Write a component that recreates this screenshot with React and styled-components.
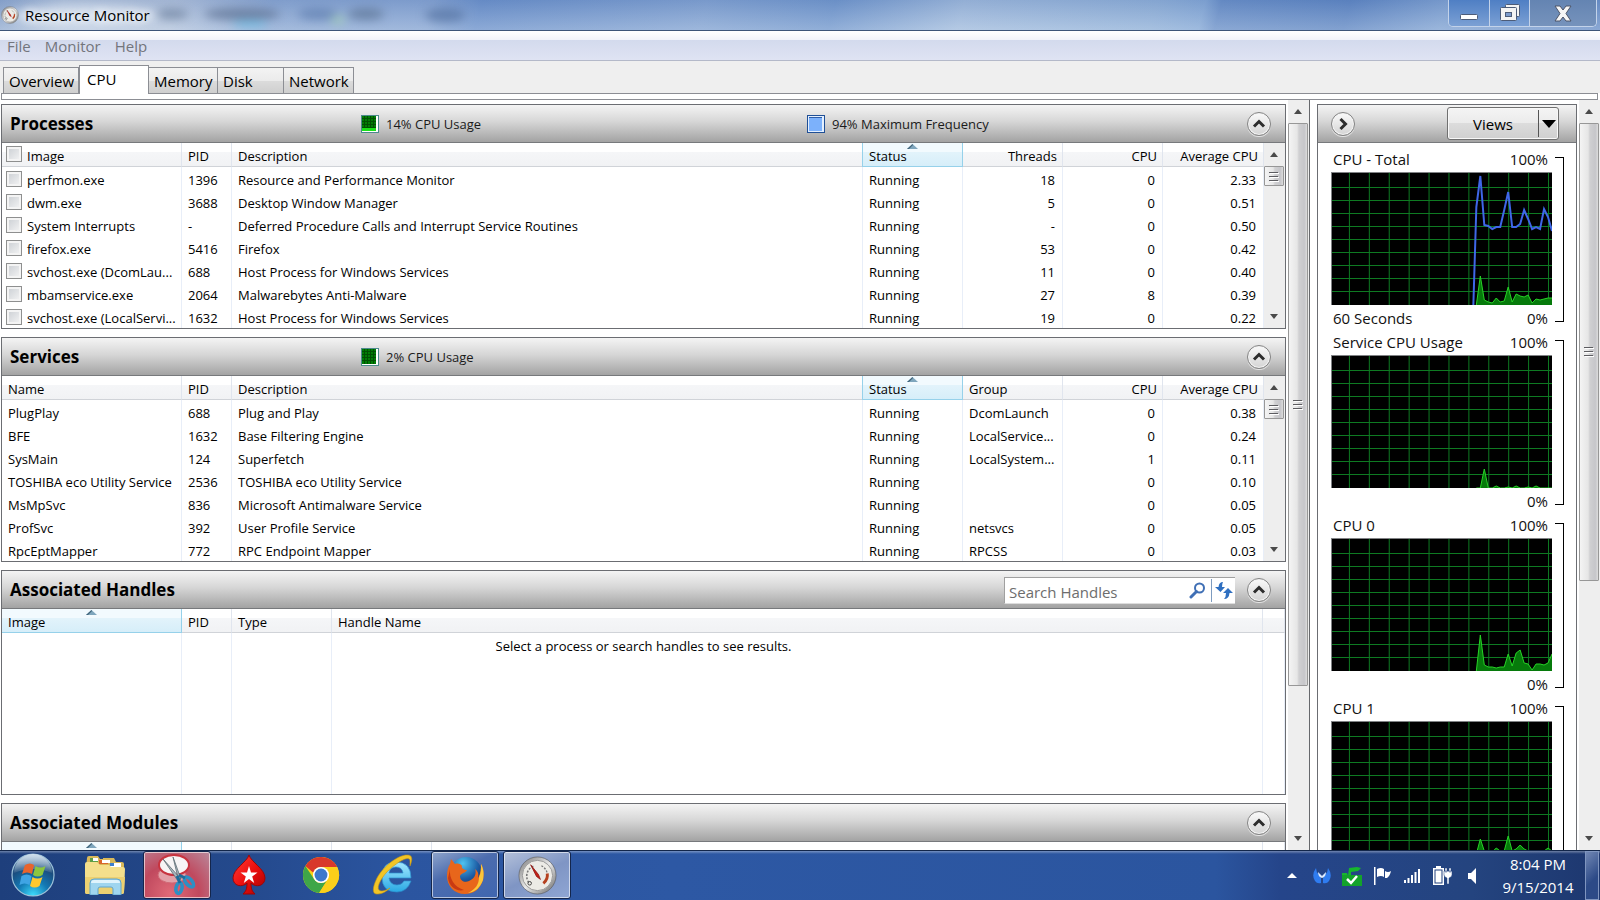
import React from "react";
import styled, { createGlobalStyle, css } from "styled-components";

const GlobalStyle = createGlobalStyle`
  *, *::before, *::after { box-sizing: border-box; }
  html, body { margin: 0; height: 100%; overflow: hidden; }
  body, button, input { font-family: "Open Sans", "Noto Sans", sans-serif; color: #000; }
  button { padding: 0; border: 0; background: none; }
  svg { display: block; }
`;

/* ---------- window frame ---------- */

const Desktop = styled.div`
  display: flex;
  flex-direction: column;
  height: 100vh;
  background: #fff;
`;

const TitleBar = styled.header`
  position: relative;
  display: flex;
  align-items: center;
  flex: none;
  height: 31px;
  padding-right: 3px;
  border-bottom: 1px solid #3c5478;
  overflow: hidden;
  background:
    linear-gradient(180deg, rgba(50, 80, 150, 0.12), rgba(255, 255, 255, 0.22)),
    linear-gradient(105deg, #8fa9cf 0%, #b4c5dc 4%, #b2c3dc 11%, #8ba8d3 17%, #86a5d3 27%, #6c92cb 30%, #82a3d2 44%, #7298cd 52%, #a0bbdd 60%, #8fb0d8 72%, #84a8d6 75%, #6a90c8 76%, #5f87c3 84%, #7fa2d2 90%, #6a90c8 100%);
`;

const Haze = styled.svg`
  position: absolute;
  left: 0;
  top: 0;
  filter: blur(5px);
`;

const AppTitle = styled.h1`
  position: relative;
  display: flex;
  align-items: center;
  flex: 1;
  gap: 6px;
  margin: 0;
  padding-left: 1px;
  font-size: 15px;
  font-weight: 400;
  text-shadow: 0 0 8px #fff, 0 0 8px #fff;
`;

const Caption = styled.div`
  position: relative;
  display: flex;
  align-self: flex-start;
  height: 27px;
  border: 1px solid #c3d3ea;
  border-top: 0;
  border-radius: 0 0 5px 5px;
  overflow: hidden;
`;

const CaptionButton = styled.button`
  display: grid;
  place-items: center;
  width: ${(p) => (p.$wide ? 67 : 40)}px;
  background: ${(p) => (p.$wide ? "linear-gradient(#6484b2, #7693bc)" : "linear-gradient(#4f7fc4, #7ba0d4)")};
  & + & { border-left: 1px solid #c3d3ea; }
`;

const MenuBar = styled.nav`
  display: flex;
  align-items: center;
  flex: none;
  gap: 14px;
  height: 30px;
  padding: 0 7px;
  border-bottom: 1px solid #b4b9c9;
  background: linear-gradient(#fff 0, #f1f3fa 30%, #d3daed 31%, #dfe3f3 100%);
`;

const MenuItem = styled.button`
  font-size: 15px;
  color: #73757c;
`;

const TabStrip = styled.div`
  display: flex;
  align-items: flex-end;
  flex: none;
  height: 32px;
  padding-left: 3px;
  background: #efefef;
`;

const Tab = styled.button`
  width: ${(p) => p.$width}px;
  height: 26px;
  padding-left: 5px;
  border: 1px solid #8c8e94;
  border-left-width: ${(p) => (p.$first ? 1 : 0)}px;
  border-bottom: 0;
  background: linear-gradient(#f3f3f3, #ebebeb 50%, #dcdcdc 51%, #cfcfcf);
  font-size: 15px;
  line-height: 26px;
  text-align: left;
  white-space: nowrap;
  ${(p) =>
    p.$active &&
    css`
      position: relative;
      z-index: 1;
      height: 29px;
      margin-bottom: -1px;
      padding: 0 0 4px 7px;
      background: #fff;
    `}
`;

const TabEdge = styled.div`
  flex: none;
  height: 7px;
  margin: 0 2px 0 1px;
  border: 1px solid #8c8e94;
  background: #fff;
`;

const Workspace = styled.div`
  display: flex;
  flex: 1;
  min-height: 0;
  padding-left: 1px;
  background: #fff;
`;

/* ---------- scroll bars ---------- */

const ScrollTrack = styled.div`
  display: flex;
  flex-direction: column;
  align-items: center;
  justify-content: space-between;
  flex: none;
  width: 21px;
  padding-right: 1px;
  background: #eee;
`;

const ScrollArrow = styled.button`
  display: grid;
  place-items: center;
  flex: none;
  width: 20px;
  height: 23px;
`;

const ScrollLane = styled.div`
  flex: 1;
  width: 100%;
  min-height: 0;
`;

const Thumb = styled.div`
  display: grid;
  place-items: center;
  height: ${(p) => p.$size};
  border: 1px solid #979797;
  border-radius: 1px;
  background: linear-gradient(90deg, #f4f4f4, #e6e6e6 45%, #d0d0d2 55%, #c6c6ca 85%, #dcdcdc);
`;

function ArrowGlyph({ down }) {
  return (
    <svg width="8" height="5" viewBox="0 0 8 5">
      <path d={down ? "M0 0h8L4 5z" : "M4 0l4 5H0z"} fill="#4a4a4a" />
    </svg>
  );
}

function Grip() {
  return (
    <svg width="10" height="11" viewBox="0 0 10 11" shapeRendering="crispEdges">
      <path d="M0 1.5h9M0 5.5h9M0 9.5h9" stroke="#5c5c60" />
      <path d="M1 2.5h9M1 6.5h9M1 10.5h9" stroke="#fff" />
    </svg>
  );
}

function ScrollBar({ size }) {
  return (
    <ScrollTrack>
      <ScrollArrow aria-label="Scroll up"><ArrowGlyph /></ScrollArrow>
      <ScrollLane>
        <Thumb $size={size}><Grip /></Thumb>
      </ScrollLane>
      <ScrollArrow aria-label="Scroll down"><ArrowGlyph down /></ScrollArrow>
    </ScrollTrack>
  );
}

/* ---------- sections ---------- */

const Sections = styled.main`
  display: flex;
  flex-direction: column;
  flex: 1;
  gap: 8px;
  min-width: 0;
  padding-top: 4px;
  overflow: hidden;
`;

const Section = styled.section`
  display: flex;
  flex-direction: column;
  flex: none;
  height: 225px;
  border: 1px solid #6b6d72;
`;

const headerFill = css`
  height: 38px;
  border-bottom: 1px solid #77797c;
  background: linear-gradient(#f4f4f4, #d6d6d6 45%, #a3a3a3);
`;

const SectionHeader = styled.div`
  ${headerFill}
  display: grid;
  grid-template-columns: 359px 446px 1fr auto;
  align-items: center;
  flex: none;
  padding-right: 14px;
`;

const SectionTitle = styled.h2`
  margin: 0;
  padding-left: 8px;
  font-size: 17px;
  font-weight: 700;
  line-height: 38px;
  white-space: nowrap;
`;

const Metric = styled.div`
  display: flex;
  align-items: center;
  gap: 7px;
  font-size: 13px;
  color: #1b1b1b;
`;

const HeaderTools = styled.div`
  display: flex;
  align-items: center;
  grid-column: 4;
  gap: 12px;
`;

const RoundButton = styled.button`
  display: grid;
  place-items: center;
  width: 24px;
  height: 24px;
  border: 1px solid #848484;
  border-radius: 50%;
  background: linear-gradient(#fafafa, #d4d4d4);
  box-shadow: inset 0 0 0 1px #f3f3f3, 0 1px 0 #e6e6e6;
`;

const SectionBody = styled.div`
  display: flex;
  flex: 1;
  min-height: 0;
  overflow: hidden;
`;

const TableArea = styled.div`
  flex: 1;
  min-width: 0;
`;

const Table = styled.table`
  width: 100%;
  border-collapse: separate;
  border-spacing: 0;
  table-layout: fixed;
  font-size: 13px;
`;

const Th = styled.th`
  position: relative;
  height: 24px;
  padding: 2px ${(p) => (p.$right ? 5 : 6)}px 0 ${(p) => (p.$check ? 4 : 6)}px;
  border-right: 1px solid #e0e5ee;
  border-bottom: 1px solid #d0d3d8;
  background: linear-gradient(#fff 40%, #f5f6f8 41%, #f1f2f4);
  font-weight: 400;
  line-height: 20px;
  text-align: ${(p) => (p.$right ? "right" : "left")};
  white-space: nowrap;
  ${(p) =>
    p.$sorted &&
    css`
      border-color: #96d1ea;
      background: linear-gradient(#f2fafe 40%, #e2f3fb 41%, #d6eef9);
      box-shadow: -1px 0 0 #96d1ea;
    `}
`;

const SortMark = styled.svg`
  position: absolute;
  top: 1px;
  left: 50%;
  margin-left: -6px;
`;

const Td = styled.td`
  height: 23px;
  padding: 3px 7px 0 ${(p) => (p.$check ? 4 : 6)}px;
  border-right: 1px solid #e8eef8;
  line-height: 20px;
  text-align: ${(p) => (p.$right ? "right" : "left")};
  white-space: nowrap;
  overflow: hidden;
`;

const FillCell = styled(Td)`
  height: 162px;
`;

const NoteArea = styled.div`
  display: grid;
  flex: 1;
  min-width: 0;
  & > * { grid-area: 1 / 1; }
`;

const Note = styled.p`
  position: relative;
  margin: 0;
  padding-top: 27px;
  font-size: 13px;
  line-height: 20px;
  text-align: center;
`;

const CheckLabel = styled.label`
  display: flex;
  align-items: center;
  gap: 5px;
`;

const CheckBox = styled.input`
  appearance: none;
  flex: none;
  width: 16px;
  height: 16px;
  margin: 0 0 3px;
  border: 1px solid #8e8f8f;
  background: linear-gradient(135deg, #c9cdd2, #f6f6f6);
  box-shadow: inset 0 0 0 2px #f4f4f4;
`;

const SearchBox = styled.div`
  display: flex;
  align-items: center;
  width: 231px;
  height: 27px;
  border: 1px solid #a0a0a0;
  border-right: 0;
  border-bottom-color: #ddd;
  background: #fff;
`;

const SearchInput = styled.input`
  flex: 1;
  min-width: 0;
  height: 25px;
  padding: 3px 4px 0;
  border: 0;
  outline: 0;
  background: none;
  font-size: 15px;
  &::placeholder { color: #6d6d6d; opacity: 1; }
`;

const SearchAction = styled.button`
  display: grid;
  place-items: center;
  width: ${(p) => (p.$wide ? 28 : 24)}px;
  height: 23px;
  & + & { border-left: 1px solid #7e9cc0; }
`;

function Chevron({ right }) {
  return (
    <svg width="14" height="14" viewBox="0 0 14 14" fill="none" stroke="#2d2d2d" strokeWidth="3">
      <path d={right ? "M4.5 2l5 5-5 5" : "M2 9.5l5-5 5 5"} />
    </svg>
  );
}

function UsageIcon({ level }) {
  return (
    <svg width="18" height="18" viewBox="0 0 18 18" shapeRendering="crispEdges">
      <rect width="18" height="18" fill="#fff" />
      <rect x="0" y="0" width="15" height="16" fill="#007d05" />
      <path d="M0 .5h17v17H.5V0" fill="none" stroke="#4c8a8c" />
      <path d="M3.5 1v15M6.5 1v15M9.5 1v15M12.5 1v15M1 3.5h14M1 6.5h14M1 9.5h14M1 12.5h14" stroke="#005003" />
      <rect x="1" y={16 - level} width="14" height={level} fill="#19e219" />
    </svg>
  );
}

function FrequencyIcon() {
  return (
    <svg width="18" height="18" viewBox="0 0 18 18" shapeRendering="crispEdges">
      <rect x=".5" y=".5" width="17" height="17" fill="#e4f0ff" stroke="#1f4f96" />
      <rect x="2" y="3" width="13" height="13" fill="#7cb1fb" />
      <path d="M2 2.5h13" stroke="#2e5da8" />
    </svg>
  );
}

function SortArrow() {
  return (
    <SortMark width="11" height="5" viewBox="0 0 11 5">
      <path d="M5.5 0L11 5H0z" fill="#7ea6bd" />
      <path d="M5.5 0L0 5h2L6 1z" fill="#3f6379" />
    </SortMark>
  );
}

function HeadRow({ columns, checkbox }) {
  return (
    <thead>
      <tr>
        {columns.map((c, i) => (
          <Th key={i} scope="col" $right={c.right} $sorted={c.sorted} $check={checkbox && i === 0}>
            {c.sorted && <SortArrow />}
            {checkbox && i === 0 ? (
              <CheckLabel><CheckBox type="checkbox" />{c.label}</CheckLabel>
            ) : (
              c.label
            )}
          </Th>
        ))}
      </tr>
    </thead>
  );
}

const Col = styled.col`
  width: ${(p) => (p.$width ? `${p.$width}px` : "auto")};
`;

function ColumnWidths({ columns }) {
  return <colgroup>{columns.map((c, i) => <Col key={i} $width={c.width} />)}</colgroup>;
}

function DataSection({ title, metrics, columns, rows, checkbox }) {
  return (
    <Section>
      <SectionHeader>
        <SectionTitle>{title}</SectionTitle>
        {metrics}
        <HeaderTools><RoundButton aria-label={`Collapse ${title}`}><Chevron /></RoundButton></HeaderTools>
      </SectionHeader>
      <SectionBody>
        <TableArea>
          <Table>
            <ColumnWidths columns={columns} />
            <HeadRow columns={columns} checkbox={checkbox} />
            <tbody>
              {rows.map((row) => (
                <tr key={row[0]}>
                  {row.map((cell, i) => (
                    <Td key={i} $right={columns[i].right} $check={checkbox && i === 0}>
                      {checkbox && i === 0 ? (
                        <CheckLabel><CheckBox type="checkbox" />{cell}</CheckLabel>
                      ) : (
                        cell
                      )}
                    </Td>
                  ))}
                </tr>
              ))}
            </tbody>
          </Table>
        </TableArea>
        <ScrollBar size="20px" />
      </SectionBody>
    </Section>
  );
}

function EmptySection({ title, columns, note, tools }) {
  return (
    <Section>
      <SectionHeader>
        <SectionTitle>{title}</SectionTitle>
        <HeaderTools>
          {tools}
          <RoundButton aria-label={`Collapse ${title}`}><Chevron /></RoundButton>
        </HeaderTools>
      </SectionHeader>
      <SectionBody>
        <NoteArea>
          <Table>
            <ColumnWidths columns={columns} />
            <HeadRow columns={columns} />
            <tbody>
              <tr>{columns.map((c, i) => <FillCell key={i} />)}</tr>
            </tbody>
          </Table>
          {note && <Note>{note}</Note>}
        </NoteArea>
      </SectionBody>
    </Section>
  );
}

/* ---------- data ---------- */

const processColumns = [
  { label: "Image", width: 180 },
  { label: "PID", width: 50 },
  { label: "Description" },
  { label: "Status", width: 100, sorted: true },
  { label: "Threads", width: 100, right: true },
  { label: "CPU", width: 100, right: true },
  { label: "Average CPU", width: 101, right: true },
];

const processes = [
  ["perfmon.exe", "1396", "Resource and Performance Monitor", "Running", "18", "0", "2.33"],
  ["dwm.exe", "3688", "Desktop Window Manager", "Running", "5", "0", "0.51"],
  ["System Interrupts", "-", "Deferred Procedure Calls and Interrupt Service Routines", "Running", "-", "0", "0.50"],
  ["firefox.exe", "5416", "Firefox", "Running", "53", "0", "0.42"],
  ["svchost.exe (DcomLau...", "688", "Host Process for Windows Services", "Running", "11", "0", "0.40"],
  ["mbamservice.exe", "2064", "Malwarebytes Anti-Malware", "Running", "27", "8", "0.39"],
  ["svchost.exe (LocalServi...", "1632", "Host Process for Windows Services", "Running", "19", "0", "0.22"],
];

const serviceColumns = [
  { label: "Name", width: 180 },
  { label: "PID", width: 50 },
  { label: "Description" },
  { label: "Status", width: 100, sorted: true },
  { label: "Group", width: 100 },
  { label: "CPU", width: 100, right: true },
  { label: "Average CPU", width: 101, right: true },
];

const services = [
  ["PlugPlay", "688", "Plug and Play", "Running", "DcomLaunch", "0", "0.38"],
  ["BFE", "1632", "Base Filtering Engine", "Running", "LocalService...", "0", "0.24"],
  ["SysMain", "124", "Superfetch", "Running", "LocalSystem...", "1", "0.11"],
  ["TOSHIBA eco Utility Service", "2536", "TOSHIBA eco Utility Service", "Running", "", "0", "0.10"],
  ["MsMpSvc", "836", "Microsoft Antimalware Service", "Running", "", "0", "0.05"],
  ["ProfSvc", "392", "User Profile Service", "Running", "netsvcs", "0", "0.05"],
  ["RpcEptMapper", "772", "RPC Endpoint Mapper", "Running", "RPCSS", "0", "0.03"],
];

const handleColumns = [
  { label: "Image", width: 180, sorted: true },
  { label: "PID", width: 50 },
  { label: "Type", width: 100 },
  { label: "Handle Name" },
  { label: "", width: 22 },
];

const moduleColumns = [
  { width: 180, sorted: true },
  { width: 50 },
  { width: 100 },
  { width: 100 },
  {},
  { width: 22 },
];

const charts = [
  {
    title: "CPU - Total",
    caption: "60 Seconds",
    floor: "0%",
    usage: [0, 29, 5, 3, 2, 7, 3, 4, 18, 3, 11, 9, 8, 10, 2, 6, 5, 6, 7, 7],
    frequency: [98, 129, 80, 79, 76, 78, 78, 95, 113, 78, 78, 81, 95, 86, 76, 78, 76, 96, 88, 74],
  },
  { title: "Service CPU Usage", floor: "0%", usage: [0, 0, 19, 0, 0, 2, 0, 0, 1, 0, 2, 0, 0, 1, 0, 2, 0, 0, 0, 0] },
  { title: "CPU 0", floor: "0%", usage: [0, 36, 6, 4, 4, 3, 4, 4, 17, 5, 18, 21, 8, 7, 1, 7, 7, 6, 8, 17] },
  { title: "CPU 1", usage: [0, 15, 3, 2, 2, 6, 3, 3, 18, 3, 5, 9, 5, 3, 2, 3, 3, 3, 6, 3] },
];

/* ---------- chart side panel ---------- */

const Splitter = styled.div`
  flex: none;
  width: 8px;
  border-left: 1px solid #66686c;
  background: #fff;
`;

const ChartPanel = styled.aside`
  flex: none;
  width: 260px;
  height: 100%;
  padding-top: 4px;
  overflow: hidden;
`;

const ChartFrame = styled.div`
  height: 100%;
  border: 1px solid #6b6d72;
  border-bottom: 0;
  overflow: hidden;
`;

const ChartHeader = styled.div`
  ${headerFill}
  display: flex;
  align-items: center;
  justify-content: space-between;
  padding: 0 17px 0 13px;
`;

const ViewsButton = styled.button`
  display: flex;
  align-items: center;
  width: 112px;
  height: 33px;
  border: 1px solid #707070;
  border-radius: 3px;
  background: linear-gradient(#f4f4f4, #ebebeb 49%, #dcdcdc 50%, #d0d0d0);
  box-shadow: inset 0 0 0 1px #f8f8f8;
  font-size: 15px;
`;

const ViewsText = styled.span`
  flex: 1;
`;

const ViewsArrow = styled.span`
  display: grid;
  place-items: center;
  width: 20px;
  height: 27px;
  border-left: 1px solid #555;
`;

const ChartList = styled.div`
  display: flex;
  flex-direction: column;
  gap: 3px;
  padding: 4px 12px 0 13px;
`;

const ChartCard = styled.figure`
  display: grid;
  grid-template-columns: 1fr 12px;
  height: 180px;
  margin: 0;
`;

const ChartMain = styled.div`
  display: grid;
  grid-template-rows: 25px 133px 22px;
  min-width: 0;
`;

const ChartLine = styled.div`
  display: flex;
  justify-content: space-between;
  padding: 0 4px 0 2px;
  font-size: 15px;
  line-height: ${(p) => (p.$foot ? 27 : 24)}px;
  color: #111;
  white-space: nowrap;
`;

const Plot = styled.div`
  border: 1px solid #808285;
  border-width: 1px 0 0 1px;
  background: #000;
`;

const Bracket = styled.div`
  width: 9px;
  margin: 10px 0 5px 3px;
  border: 1px solid #000;
  border-left: 0;
`;

const gridX = Array.from({ length: 11 }, (_, i) => 17.5 + i * 20);
const gridY = Array.from({ length: 9 }, (_, i) => 14.5 + i * 13);
const toPoints = (samples) => samples.map((v, i) => `${145 + i * 4},${132 - v}`).join(" ");

function Chart({ title, caption, floor, usage, frequency }) {
  return (
    <ChartCard>
      <ChartMain>
        <ChartLine><span>{title}</span><span>100%</span></ChartLine>
        <Plot>
          <svg width="100%" height="132" viewBox="0 0 221 132" preserveAspectRatio="none">
            <g stroke="#0e7a22" shapeRendering="crispEdges">
              {gridX.map((x) => <line key={x} x1={x} x2={x} y1="0" y2="132" />)}
              {gridY.map((y) => <line key={y} x1="0" x2="221" y1={y} y2={y} />)}
            </g>
            <polygon points={`145,132 ${toPoints(usage)} 221,132`} fill="#067a0b" />
            <polyline points={toPoints(usage)} fill="none" stroke="#27d427" />
            {frequency && (
              <polyline points={`142,132 ${toPoints(frequency)}`} fill="none" stroke="#3f66e8" strokeWidth="2" />
            )}
          </svg>
        </Plot>
        <ChartLine $foot><span>{caption}</span><span>{floor}</span></ChartLine>
      </ChartMain>
      <Bracket />
    </ChartCard>
  );
}

const PanelGap = styled.div`
  flex: none;
  width: 2px;
`;

/* ---------- taskbar ---------- */

const Taskbar = styled.footer`
  display: flex;
  flex: none;
  height: 50px;
  border-top: 1px solid #12264a;
  background:
    linear-gradient(180deg, rgba(255, 255, 255, 0.35) 0, rgba(255, 255, 255, 0) 3px),
    linear-gradient(90deg, #1e3f7c 0, #24498c 15%, #2b55a0 25%, #2d58a4 42%, #2b559f 76%, #25458a 80%, #24447f 92%, #1d376f 100%);
`;

const StartButton = styled.button`
  width: 68px;
  height: 48px;
  padding-left: 11px;
`;

const TaskList = styled.div`
  display: flex;
  flex: 1;
  gap: 4px;
  padding-left: 3px;
`;

const taskFills = {
  snip: "radial-gradient(circle at 40% 90%, #e06a78, #c0495e 50%, #b98a9d)",
  firefox: "linear-gradient(155deg, #8fa5cc, #4c6cae 40%, #3f66b0)",
  perf: "linear-gradient(155deg, #b4c1da, #7f95c4 50%, #8fa6d4)",
};

const Task = styled.button`
  display: grid;
  place-items: center;
  width: 68px;
  height: 48px;
  border: 1px solid transparent;
  border-radius: 3px;
  ${(p) =>
    p.$fill &&
    css`
      border-color: #14264c;
      background: ${taskFills[p.$fill]};
      box-shadow: inset 0 0 0 1px rgba(255, 255, 255, 0.6);
    `}
`;

const Tray = styled.div`
  display: flex;
  align-items: center;
`;

const TrayIcon = styled.button`
  display: grid;
  place-items: center;
  width: 30px;
  height: 30px;
`;

const Clock = styled.time`
  width: 94px;
  margin-left: 4px;
  font-size: 15px;
  line-height: 23px;
  color: #fff;
  text-align: center;
`;

const ShowDesktop = styled.button`
  width: 14px;
  height: 49px;
  margin-right: 1px;
  border: 1px solid #7f95bf;
  background: linear-gradient(135deg, #7187b4, #2c4a87 60%);
`;

/* ---------- drawings ---------- */

function GaugeIcon({ size }) {
  return (
    <svg width={size} height={size} viewBox="0 0 40 40">
      <defs>
        <linearGradient id={`rim${size}`} x1="0" y1="0" x2="1" y2="1">
          <stop offset="0" stopColor="#777" /><stop offset=".5" stopColor="#e8e8e8" /><stop offset="1" stopColor="#666" />
        </linearGradient>
      </defs>
      <circle cx="20" cy="20" r="19" fill={`url(#rim${size})`} stroke="#555" strokeWidth=".6" />
      <circle cx="20" cy="20" r="15.5" fill="#ecebe6" stroke="#999" />
      <path d="M11 27a11 11 0 0 1 6-17" fill="none" stroke="#777" strokeWidth="1.6" strokeDasharray="2 1.5" />
      <path d="M24 10a11 11 0 0 1 6 8" fill="none" stroke="#777" strokeWidth="1.4" strokeDasharray="2 1.5" />
      <path d="M30 18q1 6-4 10" fill="none" stroke="#b5411f" strokeWidth="3" />
      <path d="M13 9l8 10 2 5-4-3z" fill="#c52018" stroke="#8c1410" strokeWidth=".8" />
      <circle cx="12" cy="28" r="1.8" fill="none" stroke="#444" />
    </svg>
  );
}

function StartOrb() {
  return (
    <svg width="45" height="48" viewBox="0 0 45 48">
      <defs>
        <radialGradient id="orb" cx=".5" cy="1" r=".95">
          <stop offset="0" stopColor="#3fe0ff" /><stop offset=".4" stopColor="#1379b4" /><stop offset=".75" stopColor="#1b4b7c" /><stop offset="1" stopColor="#6f93b4" />
        </radialGradient>
        <linearGradient id="orbShine" x1="0" y1="0" x2="0" y2="1">
          <stop offset="0" stopColor="#dbe8f2" stopOpacity=".9" /><stop offset="1" stopColor="#dbe8f2" stopOpacity=".1" />
        </linearGradient>
      </defs>
      <circle cx="22" cy="24" r="21" fill="url(#orb)" stroke="#9fc4da" strokeWidth="1.2" />
      <path d="M3 22a19 19 0 0 1 38 0q-19-8-38 0z" fill="url(#orbShine)" />
      <path d="M14 14q5-3 9 0l-2 9q-5-3-10 0z" fill="#e8642c" />
      <path d="M24.500 15q5 3 10 0l-3 9q-5 3-9.500 0z" fill="#8cc63f" />
      <path d="M10.500 25q5-3 10 0l-2 9q-5-3-10 0z" fill="#3fa4e4" />
      <path d="M21.500 26q5 3 10 0l-3 9q-5 3-9.500 0z" fill="#fdc82f" />
    </svg>
  );
}

function FolderIcon() {
  return (
    <svg width="42" height="40" viewBox="0 0 42 40">
      <path d="M3 3q0-2 2-2h9l2 3h3V3h11l2 4h6q2 0 2 2v5H2z" fill="#d9b95a" />
      <rect x="6" y="3" width="8" height="4" fill="#5c9e48" /><rect x="9" y="3" width="5" height="3" fill="#fff" />
      <rect x="15" y="5" width="9" height="4" fill="#d9662c" /><rect x="18" y="5" width="8" height="3" fill="#fff" />
      <rect x="26" y="8" width="11" height="4" fill="#fff" /><rect x="26" y="8" width="4" height="3" fill="#3f7fcd" />
      <path d="M1 9q0-2 2-2h10l3 3h9l2 2h12q2 0 2 2l-1 23q0 2-2 2H3q-2 0-2-2z" fill="#f4df8c" />
      <path d="M1 22h40l-1 15q0 2-2 2H3q-2 0-2-2z" fill="#ecd071" />
      <path d="M6 28q0-4 4-4h23q4 0 4 4v12h-8v-6q0-2-2-2H16q-2 0-2 2v6H6z" fill="#9fd5ef" stroke="#5fa5cf" />
      <path d="M7 28q0-3 3-3h23q3 0 3 3z" fill="#dff3fc" />
    </svg>
  );
}

function SnipIcon() {
  return (
    <svg width="40" height="42" viewBox="0 0 40 42">
      <ellipse cx="15" cy="21" rx="14" ry="8" fill="#e3a0a8" stroke="#d06a76" />
      <ellipse cx="17" cy="11" rx="15" ry="10" fill="#f7f4f5" stroke="#c8333f" strokeWidth="2" />
      <path d="M6 5l18 20-3 2zM16 3l5 21 3 1z" fill="#a9b6bd" stroke="#5e6c74" strokeWidth=".8" />
      <g fill="none" stroke="#2d8fc4" strokeWidth="3.500">
        <ellipse cx="22" cy="34" rx="3" ry="5.500" transform="rotate(12 22 34)" />
        <ellipse cx="32" cy="28" rx="3" ry="6" transform="rotate(-42 32 28)" />
      </g>
      <path d="M20 22l3 7M22 21l6 3" stroke="#1c6c9b" strokeWidth="3" />
    </svg>
  );
}

function SpadeIcon() {
  return (
    <svg width="36" height="42" viewBox="0 0 36 42">
      <defs>
        <linearGradient id="spade" x1="0" y1="0" x2="1" y2="1">
          <stop offset="0" stopColor="#ff4038" /><stop offset=".5" stopColor="#ee100f" /><stop offset="1" stopColor="#a80000" />
        </linearGradient>
      </defs>
      <path d="M18 1c2 7 16 14 16 23 0 8-9 10-14 5 0 6 1 8 4 11H12c3-3 4-5 4-11-5 5-14 3-14-5C2 15 16 8 18 1z" fill="url(#spade)" stroke="#9d0505" />
      <path d="M18 12l2 6.500h6.500l-5.300 4 2 6.500L18 25l-5.200 4 2-6.500-5.300-4H16z" fill="#fff" />
    </svg>
  );
}

function ChromeIcon() {
  return (
    <svg width="38" height="40" viewBox="0 0 40 40">
      <circle cx="20" cy="20" r="19" fill="#fcd116" />
      <path d="M3.500 10.500A19 19 0 0 1 37 11.500H20a8.500 8.500 0 0 0-8 6z" fill="#d8382b" />
      <path d="M3.500 10.500A19 19 0 0 0 18 38.900l8.500-13.500A8.500 8.500 0 0 1 12.500 24z" fill="#3fa648" />
      <path d="M37 11.500A19 19 0 0 1 18 38.900l8.500-13.500a8.500 8.500 0 0 0-1.500-12.400z" fill="#fbcf1a" />
      <circle cx="20" cy="20" r="8.500" fill="#fff" />
      <circle cx="20" cy="20" r="6.800" fill="#3c78cc" />
    </svg>
  );
}

function ExplorerIcon() {
  return (
    <svg width="42" height="42" viewBox="0 0 42 42">
      <defs>
        <linearGradient id="ie" x1="0" y1="0" x2="0" y2="1">
          <stop offset="0" stopColor="#a5e9ff" /><stop offset="1" stopColor="#29a8e4" />
        </linearGradient>
      </defs>
      <path d="M39 24H17q1 7 8 7 5 0 7-4h7q-4 11-14 11-15 0-15-15Q10 8 24 8q15 0 15 16zM17 19h14q-1-6-7-6t-7 6z" fill="url(#ie)" stroke="#2b90ce" strokeWidth=".7" />
      <path d="M38 12c3-7 2-11-2-11C28 0 12 11 5 24 0 34 0 41 6 40c4 0 9-3 12-6-5 3-9 4-11 2-3-3 3-14 11-21C27 7 38 1 38 7z" fill="#f2c526" stroke="#c79511" strokeWidth=".6" />
    </svg>
  );
}

function FirefoxIcon() {
  return (
    <svg width="38" height="40" viewBox="0 0 38 40">
      <defs>
        <radialGradient id="globe" cx=".4" cy=".2" r=".8">
          <stop offset="0" stopColor="#4ec3f0" /><stop offset=".6" stopColor="#1d5da5" /><stop offset="1" stopColor="#132c62" />
        </radialGradient>
      </defs>
      <circle cx="20" cy="18" r="16" fill="url(#globe)" />
      <path d="M35 9c3 5 3 11 2 16-3 9-9 14-18 14C8 39 1 31 1 21c0-5 1-9 3-12l1-5 4 5c3-1 6 0 7 2-1 2 2 4 5 4-1 3-6 3-7 6 0 5 5 7 9 5 5-2 8-7 6-12 3 2 4 5 3 9 3-5 3-10 3-14z" fill="#e8661b" />
      <path d="M35 9c3 5 3 11 2 16-3 8-8 12-15 13 8-4 11-9 11-16 2-4 2-8 2-13z" fill="#fbc63a" />
      <path d="M4 14c-1 9 4 18 14 21-7 2-15-3-16-12z" fill="#c93a12" />
    </svg>
  );
}

function MagnifierIcon() {
  return (
    <svg width="17" height="17" viewBox="0 0 17 17" fill="none" stroke="#3f6fb5">
      <circle cx="10.500" cy="6" r="4.500" strokeWidth="2" />
      <path d="M7.500 9.500L2 15" strokeWidth="3" strokeLinecap="round" />
    </svg>
  );
}

function RefreshIcon() {
  return (
    <svg width="18" height="17" viewBox="0 0 18 17" fill="#2f6fc0">
      <path d="M8 0Q4 0 3.500 5H0l5.500 5L10 5H7q0-3 1-5z" />
      <path d="M9 17q5 0 5.500-6H18l-5-5-5 5h3q0 4-2 6z" />
    </svg>
  );
}

const tasks = [
  { name: "Windows Explorer", icon: <FolderIcon /> },
  { name: "Snipping Tool", icon: <SnipIcon />, fill: "snip" },
  { name: "PokerStars", icon: <SpadeIcon /> },
  { name: "Google Chrome", icon: <ChromeIcon /> },
  { name: "Internet Explorer", icon: <ExplorerIcon /> },
  { name: "Mozilla Firefox", icon: <FirefoxIcon />, fill: "firefox" },
  { name: "Resource Monitor", icon: <GaugeIcon size={39} />, fill: "perf" },
];

const trayIcons = [
  { name: "Show hidden icons", art: <svg width="10" height="5" viewBox="0 0 10 5"><path d="M5 0l5 5H0z" fill="#fff" /></svg> },
  {
    name: "Malwarebytes",
    art: (
      <svg width="18" height="17" viewBox="0 0 18 17" fill="#2f7cf0">
        <path d="M3 1Q-2 8 2 14q2 3 6 2V11L6 8Q3 5 3 1z" />
        <path d="M15 1q5 7 1 13-2 3-6 2V11l2-3q3-3 3-7z" />
        <path d="M5 5l4 4 4-4q0 5-4 6-4-1-4-6z" fill="#dcebff" />
      </svg>
    ),
  },
  {
    name: "Safely remove hardware",
    art: (
      <svg width="20" height="20" viewBox="0 0 20 20">
        <path d="M0 7h5l1 3 1-8 8-1 4 1-3 3-7 1v3h11v11H0z" fill="#16b62e" />
        <path d="M0 9h20v11H0z" fill="#13a32a" />
        <path d="M5 13l4 4 6-7" fill="none" stroke="#fff" strokeWidth="2.500" />
      </svg>
    ),
  },
  {
    name: "Action Center",
    art: (
      <svg width="18" height="19" viewBox="0 0 18 19" fill="#fff">
        <path d="M1 1h1.500v18H1zM4 3q4-2 7 0v8q-3-2-7 0zM12 5q3 2 6 0-1 5-4 7h-2z" />
      </svg>
    ),
  },
  {
    name: "Network signal",
    art: (
      <svg width="16" height="14" viewBox="0 0 16 14" fill="#fff">
        <path d="M0 11h2v3H0zM3.500 9h2v5h-2zM7 6h2v8H7zM10.500 3h2v11h-2zM14 0h2v14h-2z" />
      </svg>
    ),
  },
  {
    name: "Battery",
    art: (
      <svg width="19" height="19" viewBox="0 0 19 19">
        <path d="M3 0h5v2h3v17H0V2h3z" fill="#fff" />
        <path d="M1.500 3.500h8v14h-8z" fill="#20407f" /><path d="M2.500 4.500h6v12h-6z" fill="#fff" />
        <path d="M11 5h8v4q0 2-3 3v6h-2v-6q-3-1-3-3zM12 2h2v4h-2zM16 2h2v4h-2z" fill="#fff" stroke="#20407f" strokeWidth=".5" />
      </svg>
    ),
  },
  {
    name: "Volume",
    art: (
      <svg width="10" height="18" viewBox="0 0 10 18">
        <path d="M1 6h3l5-5v16l-5-5H1z" fill="#fff" />
      </svg>
    ),
  },
];

function CaptionButtons() {
  return (
    <Caption>
      <CaptionButton aria-label="Minimize">
        <svg width="18" height="16" viewBox="0 0 18 16"><rect x=".5" y="9.500" width="17" height="5" rx="1" fill="#fff" stroke="#4d5c78" /></svg>
      </CaptionButton>
      <CaptionButton aria-label="Restore">
        <svg width="20" height="18" viewBox="0 0 20 18" fill="#f4f4f4" stroke="#4d5c78">
          <rect x="5.500" y=".5" width="14" height="12" rx="1" />
          <rect x=".5" y="3.500" width="16" height="13" rx="1" />
          <rect x="5.500" y="8.500" width="6" height="4" fill="#7c9bcc" />
        </svg>
      </CaptionButton>
      <CaptionButton $wide aria-label="Close">
        <svg width="18" height="17" viewBox="0 0 18 17">
          <path d="M1 1h5l3 4 3-4h5l-5 7.500L17 16h-5l-3-4-3 4H1l5-7.500z" fill="#f6f6f6" stroke="#4d5468" />
        </svg>
      </CaptionButton>
    </Caption>
  );
}

export default function App() {
  return (
    <Desktop>
      <GlobalStyle />
      <TitleBar>
        <Haze width="520" height="30">
          <ellipse cx="85" cy="16" rx="75" ry="11" fill="#dce6f2" opacity=".7" />
          <ellipse cx="172" cy="14" rx="16" ry="5" fill="#5e7391" opacity=".6" />
          <ellipse cx="242" cy="14" rx="38" ry="6" fill="#5b6f90" opacity=".7" />
          <ellipse cx="250" cy="24" rx="18" ry="4" fill="#6cbfe6" opacity=".7" />
          <ellipse cx="318" cy="14" rx="20" ry="6" fill="#5f7fb0" opacity=".7" />
          <ellipse cx="338" cy="20" rx="8" ry="5" fill="#a3cdb9" opacity=".7" />
          <ellipse cx="366" cy="14" rx="18" ry="6" fill="#5c7596" opacity=".7" />
          <ellipse cx="445" cy="15" rx="20" ry="7" fill="#5674a3" opacity=".7" />
        </Haze>
        <AppTitle><GaugeIcon size={18} />Resource Monitor</AppTitle>
        <CaptionButtons />
      </TitleBar>
      <MenuBar>
        <MenuItem>File</MenuItem>
        <MenuItem>Monitor</MenuItem>
        <MenuItem>Help</MenuItem>
      </MenuBar>
      <TabStrip role="tablist">
        <Tab role="tab" $width={76} $first>Overview</Tab>
        <Tab role="tab" aria-selected="true" $width={70} $active $first>CPU</Tab>
        <Tab role="tab" $width={69}>Memory</Tab>
        <Tab role="tab" $width={66}>Disk</Tab>
        <Tab role="tab" $width={70}>Network</Tab>
      </TabStrip>
      <TabEdge />
      <Workspace>
        <Sections>
          <DataSection
            title="Processes"
            columns={processColumns}
            rows={processes}
            checkbox
            metrics={
              <>
                <Metric><UsageIcon level={3} />14% CPU Usage</Metric>
                <Metric><FrequencyIcon />94% Maximum Frequency</Metric>
              </>
            }
          />
          <DataSection
            title="Services"
            columns={serviceColumns}
            rows={services}
            metrics={<Metric><UsageIcon level={0} />2% CPU Usage</Metric>}
          />
          <EmptySection
            title="Associated Handles"
            columns={handleColumns}
            note="Select a process or search handles to see results."
            tools={
              <SearchBox role="search">
                <SearchInput type="text" placeholder="Search Handles" aria-label="Search Handles" />
                <SearchAction $wide aria-label="Search"><MagnifierIcon /></SearchAction>
                <SearchAction aria-label="Refresh"><RefreshIcon /></SearchAction>
              </SearchBox>
            }
          />
          <EmptySection title="Associated Modules" columns={moduleColumns} />
        </Sections>
        <PanelGap />
        <ScrollBar size="80%" />
        <Splitter />
        <ChartPanel>
          <ChartFrame>
            <ChartHeader>
              <RoundButton aria-label="Hide charts"><Chevron right /></RoundButton>
              <ViewsButton>
                <ViewsText>Views</ViewsText>
                <ViewsArrow><svg width="14" height="8" viewBox="0 0 14 8"><path d="M0 0h14L7 8z" /></svg></ViewsArrow>
              </ViewsButton>
            </ChartHeader>
            <ChartList>
              {charts.map((c) => <Chart key={c.title} {...c} />)}
            </ChartList>
          </ChartFrame>
        </ChartPanel>
        <PanelGap />
        <ScrollBar size="65%" />
      </Workspace>
      <Taskbar>
        <StartButton aria-label="Start"><StartOrb /></StartButton>
        <TaskList>
          {tasks.map((t) => <Task key={t.name} aria-label={t.name} $fill={t.fill}>{t.icon}</Task>)}
        </TaskList>
        <Tray>
          {trayIcons.map((t) => <TrayIcon key={t.name} aria-label={t.name}>{t.art}</TrayIcon>)}
          <Clock>8:04 PM<br />9/15/2014</Clock>
          <ShowDesktop aria-label="Show desktop" />
        </Tray>
      </Taskbar>
    </Desktop>
  );
}
